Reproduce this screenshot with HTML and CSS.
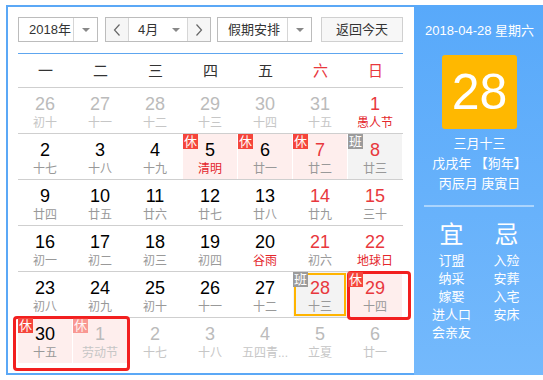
FILE: index.html
```html
<!DOCTYPE html>
<html lang="zh-CN">
<head>
  <meta charset="UTF-8">
  <title>万年历</title>
  <link rel="stylesheet" href="styles.css">
</head>
<body>
  <div class="calendar">
    <div class="main">
      <div class="toolbar">
        <div class="select year"><span class="val">2018年</span><span class="arrow"><i class="caret"></i></span></div>
        <div class="month-group">
          <span class="nav prev"><svg width="8" height="12" viewBox="0 0 8 12"><polyline points="6.5,0.5 1.5,6 6.5,11.5" fill="none" stroke="#666" stroke-width="1.2"/></svg></span>
          <div class="select month"><span class="val">4月</span><span class="arrow"><i class="caret"></i></span></div>
          <span class="nav next"><svg width="8" height="12" viewBox="0 0 8 12"><polyline points="1.5,0.5 6.5,6 1.5,11.5" fill="none" stroke="#666" stroke-width="1.2"/></svg></span>
        </div>
        <div class="select holiday"><span class="val">假期安排</span><span class="arrow"><i class="caret"></i></span></div>
        <span class="today-btn">返回今天</span>
      </div>

      <div class="week">
        <span>一</span><span>二</span><span>三</span><span>四</span><span>五</span><span class="red">六</span><span class="red">日</span>
      </div>

      <div class="days">
        <div class="row">
          <div class="cell off"><b class="num">26</b><span class="lun">初十</span></div>
          <div class="cell off"><b class="num">27</b><span class="lun">十一</span></div>
          <div class="cell off"><b class="num">28</b><span class="lun">十二</span></div>
          <div class="cell off"><b class="num">29</b><span class="lun">十三</span></div>
          <div class="cell off"><b class="num">30</b><span class="lun">十四</span></div>
          <div class="cell off"><b class="num">31</b><span class="lun">十五</span></div>
          <div class="cell wkend fest"><b class="num">1</b><span class="lun">愚人节</span></div>
        </div>
        <div class="row">
          <div class="cell"><b class="num">2</b><span class="lun">十七</span></div>
          <div class="cell"><b class="num">3</b><span class="lun">十八</span></div>
          <div class="cell"><b class="num">4</b><span class="lun">十九</span></div>
          <div class="cell rest fest"><i class="badge">休</i><b class="num">5</b><span class="lun">清明</span></div>
          <div class="cell rest"><i class="badge">休</i><b class="num">6</b><span class="lun">廿一</span></div>
          <div class="cell rest wkend"><i class="badge">休</i><b class="num">7</b><span class="lun">廿二</span></div>
          <div class="cell work wkend"><i class="badge">班</i><b class="num">8</b><span class="lun">廿三</span></div>
        </div>
        <div class="row">
          <div class="cell"><b class="num">9</b><span class="lun">廿四</span></div>
          <div class="cell"><b class="num">10</b><span class="lun">廿五</span></div>
          <div class="cell"><b class="num">11</b><span class="lun">廿六</span></div>
          <div class="cell"><b class="num">12</b><span class="lun">廿七</span></div>
          <div class="cell"><b class="num">13</b><span class="lun">廿八</span></div>
          <div class="cell wkend"><b class="num">14</b><span class="lun">廿九</span></div>
          <div class="cell wkend"><b class="num">15</b><span class="lun">三十</span></div>
        </div>
        <div class="row">
          <div class="cell"><b class="num">16</b><span class="lun">初一</span></div>
          <div class="cell"><b class="num">17</b><span class="lun">初二</span></div>
          <div class="cell"><b class="num">18</b><span class="lun">初三</span></div>
          <div class="cell"><b class="num">19</b><span class="lun">初四</span></div>
          <div class="cell fest"><b class="num">20</b><span class="lun">谷雨</span></div>
          <div class="cell wkend"><b class="num">21</b><span class="lun">初六</span></div>
          <div class="cell wkend fest"><b class="num">22</b><span class="lun">地球日</span></div>
        </div>
        <div class="row">
          <div class="cell"><b class="num">23</b><span class="lun">初八</span></div>
          <div class="cell"><b class="num">24</b><span class="lun">初九</span></div>
          <div class="cell"><b class="num">25</b><span class="lun">初十</span></div>
          <div class="cell"><b class="num">26</b><span class="lun">十一</span></div>
          <div class="cell"><b class="num">27</b><span class="lun">十二</span></div>
          <div class="cell work wkend today"><i class="badge">班</i><b class="num">28</b><span class="lun">十三</span></div>
          <div class="cell rest wkend"><i class="badge">休</i><b class="num">29</b><span class="lun">十四</span></div>
        </div>
        <div class="row">
          <div class="cell rest"><i class="badge">休</i><b class="num">30</b><span class="lun">十五</span></div>
          <div class="cell rest off"><i class="badge">休</i><b class="num">1</b><span class="lun">劳动节</span></div>
          <div class="cell off"><b class="num">2</b><span class="lun">十七</span></div>
          <div class="cell off"><b class="num">3</b><span class="lun">十八</span></div>
          <div class="cell off"><b class="num">4</b><span class="lun">五四青...</span></div>
          <div class="cell off"><b class="num">5</b><span class="lun">立夏</span></div>
          <div class="cell off"><b class="num">6</b><span class="lun">廿一</span></div>
        </div>
      </div>

      <!-- 劳动节假期标记 -->
      <div class="mark mark-a"></div>
      <div class="mark mark-b"></div>
    </div>

    <div class="side">
      <div class="side-date">2018-04-28 星期六</div>
      <div class="big-day">28</div>
      <div class="lunar">
        <div>三月十三</div>
        <div>戊戌年 【狗年】</div>
        <div>丙辰月 庚寅日</div>
      </div>
      <div class="divider"></div>
      <div class="yiji">
        <div class="col">
          <h4>宜</h4>
          <ul>
            <li>订盟</li>
            <li>纳采</li>
            <li>嫁娶</li>
            <li>进人口</li>
            <li>会亲友</li>
          </ul>
        </div>
        <div class="col">
          <h4>忌</h4>
          <ul>
            <li>入殓</li>
            <li>安葬</li>
            <li>入宅</li>
            <li>安床</li>
          </ul>
        </div>
      </div>
    </div>
  </div>
</body>
</html>
```

FILE: styles.css
```css
html, body {
  margin: 0;
  overflow: hidden;
  background: #fff;
}
body {
  font-family: "Liberation Sans", "Noto Sans CJK SC", sans-serif;
  color: #333;
}
.calendar {
  display: flex;
  width: 537px;
  height: 366px;
  margin: 5px 0 0 6px;
  border: 2px solid #5ba8f6;
  border-right: none;
}

/* left part */
.main {
  position: relative;
  width: 406px;
  flex: none;
  box-sizing: border-box;
  padding: 10px 11px 0 10px;
  background: #fff;
}
.toolbar {
  display: flex;
  height: 25px;
  font-size: 13px;
}
.select {
  display: flex;
  height: 25px;
  box-sizing: border-box;
  border: 1px solid #bcbcbc;
  background: #fff;
}
.select .val {
  flex: 1;
  padding-left: 10px;
  line-height: 23px;
  white-space: nowrap;
}
.select .arrow {
  display: flex;
  align-items: center;
  justify-content: center;
  width: 23px;
  border-left: 1px solid #d6d6d6;
}
.caret {
  width: 0;
  height: 0;
  border-top: 4px solid #888;
  border-left: 4px solid transparent;
  border-right: 4px solid transparent;
}
.year { width: 80px; }
.month-group {
  display: flex;
  height: 25px;
  margin-left: 7px;
  box-sizing: border-box;
  border: 1px solid #bcbcbc;
}
.nav {
  display: flex;
  align-items: center;
  justify-content: center;
  width: 22px;
  background: #f6f6f6;
}
.month {
  width: 60px;
  height: 23px;
  border: none;
  border-left: 1px solid #d6d6d6;
  border-right: 1px solid #d6d6d6;
}
.month .val { padding-left: 9px; }
.month .arrow { border-left: none; width: 22px; }
.holiday { width: 95px; margin-left: 6px; }
.today-btn {
  width: 82px;
  height: 25px;
  margin-left: 9px;
  box-sizing: border-box;
  border: 1px solid #d0d0d0;
  background: #f7f7f7;
  text-align: center;
  line-height: 23px;
}

.week {
  display: grid;
  grid-template-columns: repeat(7, 55px);
  height: 33px;
  margin-top: 11px;
  border-top: 1px solid #5ea6ef;
  border-bottom: 1px solid #cfcfcf;
  font-size: 15px;
  line-height: 33px;
  text-align: center;
}
.week .red { color: #e8383d; }

.row {
  display: grid;
  grid-template-columns: repeat(7, 55px);
  border-bottom: 1px solid #cfcfcf;
}
.row:last-child { border-bottom: none; }
.cell {
  position: relative;
  height: 45px;
  box-sizing: border-box;
  padding-top: 6px;
  border-right: 1px solid transparent;
  background-clip: padding-box;
  text-align: center;
}
.num {
  display: block;
  font-size: 18px;
  font-weight: normal;
  line-height: 20px;
  color: #000;
}
.lun {
  display: block;
  margin-top: 1px;
  font-size: 12px;
  line-height: 16px;
  color: #999;
  white-space: nowrap;
}
.wkend .num { color: #e8383d; }
.fest .lun { color: #e4262c; }
.off .num { color: #bbb; }
.off .lun { color: #c6c6c6; }
.rest { background-color: #feeeed; }
.work { background-color: #f3f3f3; }
.badge {
  position: absolute;
  left: 0;
  top: 0;
  z-index: 1;
  width: 15px;
  height: 15px;
  font-size: 13px;
  font-style: normal;
  line-height: 15px;
  color: #fff;
  background: #f5453b;
}
.work .badge { background: #9b9b9b; }
.off .badge { opacity: .5; }
.today::after {
  content: "";
  position: absolute;
  left: 1px;
  top: 1px;
  right: 1px;
  bottom: 1px;
  border: 2px solid #ffb400;
}

.mark {
  position: absolute;
  box-sizing: border-box;
  border: 3px solid #f21f1f;
  border-radius: 4px;
}
.mark-a { left: 339px; top: 264px; width: 64px; height: 49px; }
.mark-b { left: 5px; top: 309px; width: 117px; height: 55px; }

/* right part */
.side {
  width: 131px;
  flex: none;
  margin: -2px 0;
  box-sizing: border-box;
  padding-top: 16px;
  background: linear-gradient(#58a9fa, #74b9fc);
  color: #fff;
  text-align: center;
}
.side-date {
  font-size: 13px;
  line-height: 20px;
}
.big-day {
  width: 75px;
  height: 74px;
  margin: 14px auto 0;
  border-radius: 3px;
  background: #ffb800;
  font-size: 50px;
  line-height: 74px;
}
.lunar {
  margin-top: 5px;
  font-size: 13px;
  line-height: 20px;
}
.divider {
  height: 2px;
  margin: 11px 11px 0 10px;
  background: rgba(255, 255, 255, .45);
}
.yiji {
  display: flex;
  margin: 0 11px 0 10px;
}
.yiji .col { flex: 1; }
.yiji h4 {
  margin: 13px 0 2px;
  font-size: 24px;
  font-weight: normal;
  line-height: 30px;
}
.yiji ul {
  list-style: none;
  margin: 0;
  padding: 0;
}
.yiji li {
  font-size: 13px;
  line-height: 18px;
  white-space: nowrap;
}
```
